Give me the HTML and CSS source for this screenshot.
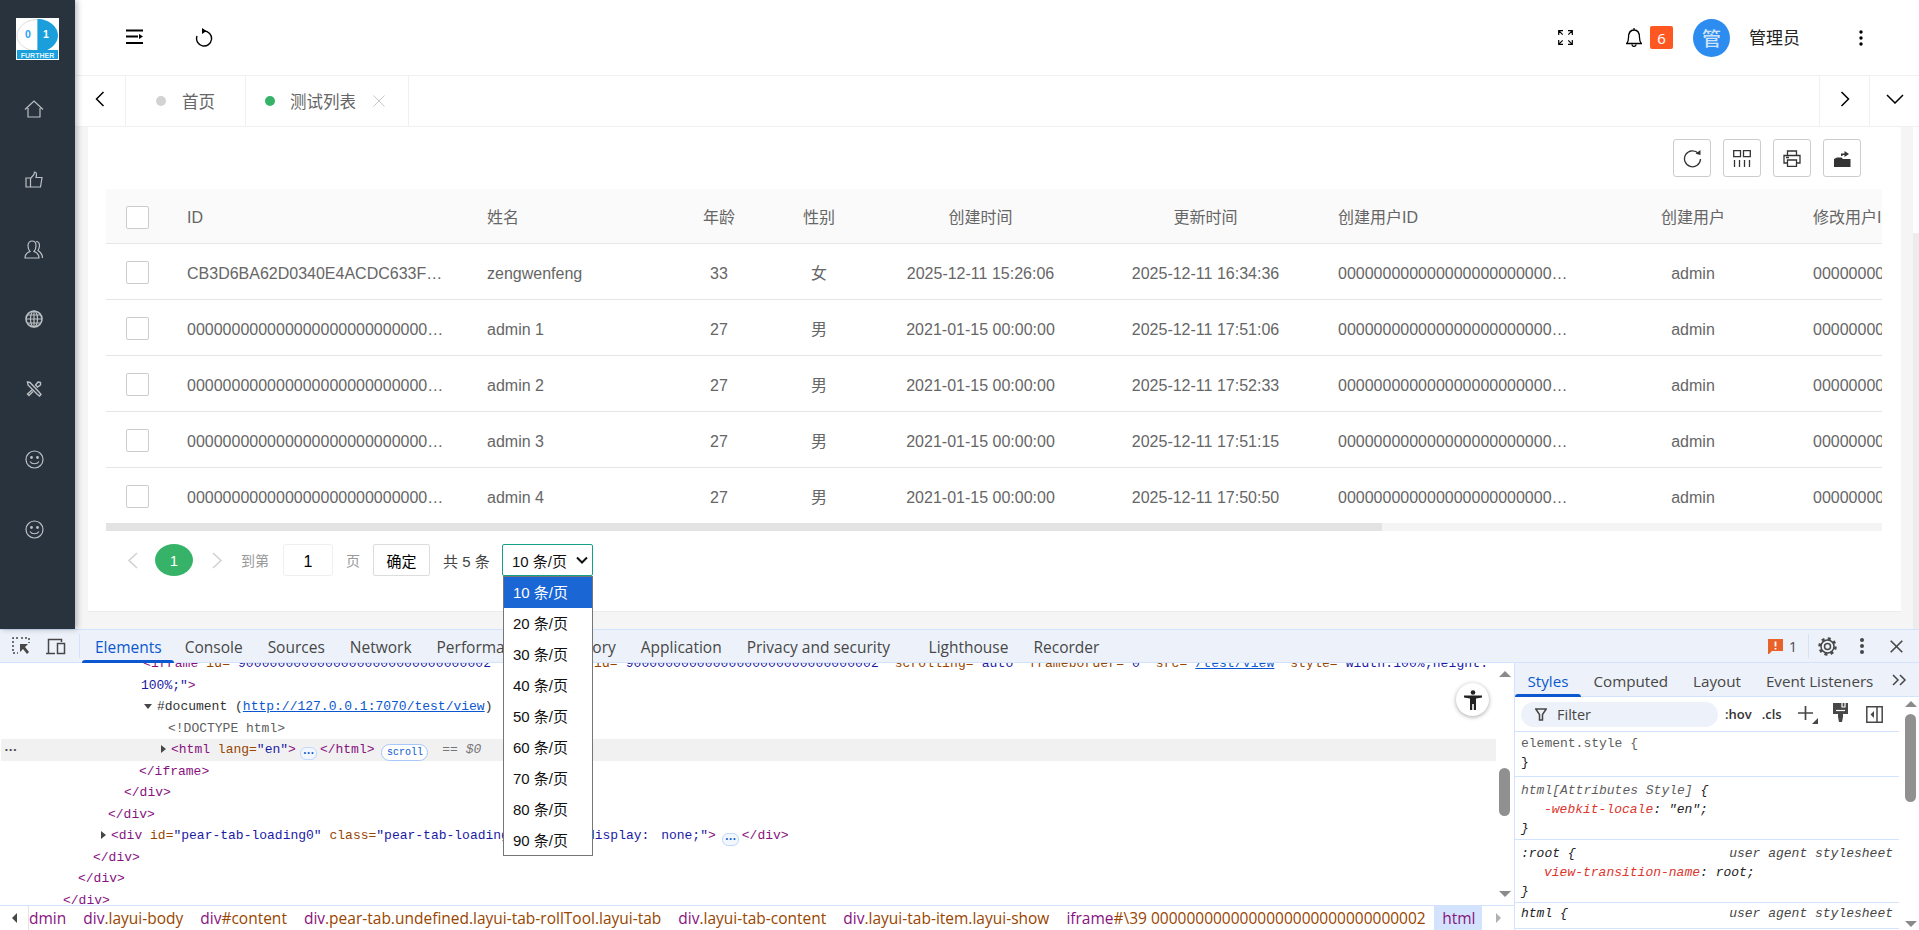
FILE: index.html
```html
<!DOCTYPE html>
<html lang="zh">
<head>
<meta charset="utf-8">
<title>测试列表</title>
<link rel="stylesheet" href="styles.css">
</head>
<body>
<div class="app">
  <aside class="side">
    <div class="logo">
      <svg width="43" height="42" viewBox="0 0 43 42">
        <rect width="43" height="42" fill="#fff"/>
        <path d="M21.5 1.5C9 1.5 1 10 1 17.5S9 33 21.5 33z" fill="#fff" stroke="#ddd"/>
        <path d="M21.5 1C33 1 42 9 42 17.5S33 34 21.5 34z" fill="#1a9fdc"/>
        <text x="12" y="20" class="logo-d logo-blue">0</text>
        <text x="30" y="20" class="logo-d">1</text>
        <rect x="1" y="32" width="41" height="9" fill="#1a9fdc"/>
        <text x="21.5" y="39.500" class="logo-t">FURTHER</text>
      </svg>
    </div>
    <nav class="nav">
      <a class="nav-i"><svg width="20" height="18" viewBox="0 0 20 18"><path d="M1 9.5 10 1l9 8.5M4 8v9h12V8"/></svg></a>
      <a class="nav-i"><svg width="18" height="17" viewBox="0 0 18 17"><path d="M1 7h4.500v9H1zM5.500 7.500 9 3.500 9.500 1c2 0 2.500 2 1.500 5.500h6L15.500 16h-10"/></svg></a>
      <a class="nav-i"><svg width="20" height="19" viewBox="0 0 20 19"><path d="M1 18c0-4 2-5.500 5-6.500C4 9.500 4 7 4 5.500 4 2.500 6 1 8 1s4 1.500 4 4.500c0 1.500 0 4-2 6 3 1 5 2.500 5 6.500zM12 1.500c2.500 0 3.500 2 3.500 4s-.5 3.500-1.500 5c2.500 1.500 4.500 3 4.500 7.500"/></svg></a>
      <a class="nav-i"><svg width="18" height="18" viewBox="0 0 18 18"><circle cx="9" cy="9" r="8" stroke-width="1.600"/><ellipse cx="9" cy="9" rx="3.500" ry="8"/><path d="M1 9h16M2 5h14M2 13h14M9 1v16"/></svg></a>
      <a class="nav-i"><svg width="16" height="16" viewBox="0 0 16 16"><path d="M1.500 1 4 1.500l9 9.500 2 2.500L13.500 15 11 13 2 4zM14.500 1.500 12 1 9.500 4l2 2 3-2zM6 9 1.500 13l1.500 1.500L7 10.500" stroke-width="1.400"/></svg></a>
      <a class="nav-i"><svg width="19" height="19" viewBox="0 0 19 19"><circle cx="9.500" cy="9.500" r="8.500"/><circle cx="6.500" cy="7.500" r=".8"/><circle cx="12.500" cy="7.500" r=".8"/><path d="M5 11.500c2 3 7 3 9 0"/></svg></a>
      <a class="nav-i"><svg width="19" height="19" viewBox="0 0 19 19"><circle cx="9.500" cy="9.500" r="8.500"/><circle cx="6.500" cy="7.500" r=".8"/><circle cx="12.500" cy="7.500" r=".8"/><path d="M5 11.500c2 3 7 3 9 0"/></svg></a>
    </nav>
  </aside>

  <main class="main">
    <header class="top">
      <div class="top-l">
        <svg class="ic" width="17" height="16" viewBox="0 0 17 16"><path d="M0 1.500h17M0 7.500h12M0 14h17" stroke-width="2"/><path class="solid" d="M13 5l4 2.500L13 10z"/></svg>
        <svg class="ic" width="18" height="19" viewBox="0 0 18 19"><path d="M9 3a7.500 7.500 0 1 1-7 5" stroke-width="1.400"/><path class="solid" d="M7 0l4.500 3L7 6z"/></svg>
      </div>
      <div class="top-r">
        <svg class="ic fs" width="15" height="15" viewBox="0 0 15 15"><path d="M.7 5V.7H5M.7.7l4 4M14.300 5V.7H10M14.300.7l-4 4M.7 10v4.300H5M.7 14.300l4-4M14.300 10v4.300H10M14.300 14.300l-4-4" stroke-width="1.200"/></svg>
        <svg class="ic bell" width="16" height="19" viewBox="0 0 16 19"><path d="M.7 15.500c1.500-1.500 1.800-3 1.800-6C2.500 5 4.500 2 8 2s5.500 3 5.500 7.500c0 3 .3 4.500 1.800 6zM8 0v2M6 16.500c0 2.500 4 2.500 4 0" stroke-width="1.300"/></svg>
        <span class="badge">6</span>
        <span class="avatar">管</span>
        <span class="uname">管理员</span>
        <svg class="more" width="4" height="16" viewBox="0 0 4 16"><circle cx="2" cy="2" r="1.700"/><circle cx="2" cy="8" r="1.700"/><circle cx="2" cy="14" r="1.700"/></svg>
      </div>
    </header>
    <div class="tabs">
      <button class="tab-nav"><svg width="10" height="16" viewBox="0 0 10 16"><path d="M8.500 1 1.500 8l7 7" stroke-width="1.500"/></svg></button>
      <div class="tab tab-a"><i class="dot dot-g"></i><span>首页</span></div>
      <div class="tab tab-b"><i class="dot dot-on"></i><span>测试列表</span><svg class="tab-x" width="12" height="12" viewBox="0 0 12 12"><path d="M.5.5l11 11M11.500.5l-11 11"/></svg></div>
      <div class="tab-fill"></div>
      <button class="tab-nav tab-nav-r"><svg width="10" height="16" viewBox="0 0 10 16"><path d="M1.500 1l7 7-7 7" stroke-width="1.500"/></svg></button>
      <button class="tab-nav tab-nav-r"><svg width="18" height="10" viewBox="0 0 18 10"><path d="M1 1l8 8 8-8" stroke-width="1.500"/></svg></button>
    </div>
    <div class="content">
      <section class="card">
        <div class="tools">
          <button class="tool"><svg width="19" height="19" viewBox="0 0 19 19"><path d="M15.500 4.500A8 8 0 1 0 17.500 10" stroke-width="1.300"/><path class="solid" d="M12.500 4.800 17.500 6V1z"/></svg></button>
          <button class="tool"><svg width="18" height="17" viewBox="0 0 18 17"><path d="M.7.700h6.800v6H.7zM10.500.700h6.800v6h-6.800zM1.500 10v7M6.500 10v7M11.500 10v7M16.500 10v7" stroke-width="1.300"/></svg></button>
          <button class="tool"><svg width="18" height="17" viewBox="0 0 18 17"><path d="M4.500 5V1h9v4M4.500 13H1V5.500h16V13h-3.500M4.500 10h9v6.500h-9zM3 7.500h3" stroke-width="1.300"/></svg></button>
          <button class="tool"><svg width="17" height="18" viewBox="0 0 17 18"><path class="solid" d="M0 10l3-1.500h4.500l1.500 1.500h7.500V18H0zM7 7V4.500h3.500V2L15 5l-4.500 3V6h-2v1z"/></svg></button>
        </div>
        <div class="tbl-wrap">
          <table class="tbl">
            <colgroup><col class="c0"><col class="c1"><col class="c2"><col class="c3"><col class="c4"><col class="c5"><col class="c6"><col class="c7"><col class="c8"><col class="c9"></colgroup>
            <thead>
              <tr><th><i class="cb"></i></th><th class="l">ID</th><th class="l">姓名</th><th>年龄</th><th>性别</th><th>创建时间</th><th>更新时间</th><th class="l">创建用户ID</th><th>创建用户</th><th class="l">修改用户ID</th></tr>
            </thead>
            <tbody>
              <tr><td><i class="cb"></i></td><td class="l">CB3D6BA62D0340E4ACDC633F74A1B2C9</td><td class="l">zengwenfeng</td><td>33</td><td>女</td><td>2025-12-11 15:26:06</td><td>2025-12-11 16:34:36</td><td class="l">00000000000000000000000000000001</td><td>admin</td><td class="l">00000000000000000000000000000001</td></tr>
              <tr><td><i class="cb"></i></td><td class="l">00000000000000000000000000000001</td><td class="l">admin 1</td><td>27</td><td>男</td><td>2021-01-15 00:00:00</td><td>2025-12-11 17:51:06</td><td class="l">00000000000000000000000000000001</td><td>admin</td><td class="l">00000000000000000000000000000001</td></tr>
              <tr><td><i class="cb"></i></td><td class="l">00000000000000000000000000000002</td><td class="l">admin 2</td><td>27</td><td>男</td><td>2021-01-15 00:00:00</td><td>2025-12-11 17:52:33</td><td class="l">00000000000000000000000000000001</td><td>admin</td><td class="l">00000000000000000000000000000001</td></tr>
              <tr><td><i class="cb"></i></td><td class="l">00000000000000000000000000000003</td><td class="l">admin 3</td><td>27</td><td>男</td><td>2021-01-15 00:00:00</td><td>2025-12-11 17:51:15</td><td class="l">00000000000000000000000000000001</td><td>admin</td><td class="l">00000000000000000000000000000001</td></tr>
              <tr class="last"><td><i class="cb"></i></td><td class="l">00000000000000000000000000000004</td><td class="l">admin 4</td><td>27</td><td>男</td><td>2021-01-15 00:00:00</td><td>2025-12-11 17:50:50</td><td class="l">00000000000000000000000000000001</td><td>admin</td><td class="l">00000000000000000000000000000001</td></tr>
            </tbody>
          </table>
        </div>
        <div class="hbar"><div class="hthumb"></div></div>
        <div class="pager">
          <svg class="p-arrow" width="11" height="17" viewBox="0 0 11 17"><path d="M10 1 2 8.500l8 7.500" stroke-width="1.600"/></svg>
          <span class="p-cur">1</span>
          <svg class="p-arrow p-next" width="11" height="17" viewBox="0 0 11 17"><path d="M1 1l8 7.500L1 16" stroke-width="1.600"/></svg>
          <span class="p-txt p-to">到第</span>
          <span class="p-in">1</span>
          <span class="p-txt p-pg">页</span>
          <span class="p-ok">确定</span>
          <span class="p-count">共 5 条</span>
          <div class="p-sel">
            <span>10 条/页</span>
            <svg width="12" height="8" viewBox="0 0 12 8"><path d="M1 1.500l5 5 5-5" stroke-width="2"/></svg>
            <ul class="p-menu">
              <li class="on">10 条/页</li><li>20 条/页</li><li>30 条/页</li><li>40 条/页</li><li>50 条/页</li><li>60 条/页</li><li>70 条/页</li><li>80 条/页</li><li>90 条/页</li>
            </ul>
          </div>
        </div>
      </section>
      <div class="vbar"><div class="vthumb"></div></div>
    </div>
  </main>
</div>

<section class="dt">
  <div class="dt-bar">
    <svg class="dt-ic inspect" width="18" height="18" viewBox="0 0 18 18"><path class="dash" d="M6 1H1v15h5M9 1h8v5"/><path class="solid dark" d="M8 7h8l-3 3 4 5-2 2-4-5-3 3z"/></svg>
    <svg class="dt-ic device" width="21" height="17" viewBox="0 0 21 17"><path d="M1 15.500h9M3.500 15V1.500h13V4M12.500 5.500h7v10h-7z" stroke-width="1.500"/></svg>
    <i class="dt-sep"></i>
    <nav class="dt-tabs">
      <span class="dt-tab on">Elements</span><span class="dt-tab">Console</span><span class="dt-tab">Sources</span><span class="dt-tab">Network</span><span class="dt-tab">Performance</span><span class="dt-tab">Memory</span><span class="dt-tab">Application</span><span class="dt-tab wide">Privacy and security</span><span class="dt-tab">Lighthouse</span><span class="dt-tab">Recorder</span>
    </nav>
    <div class="dt-right">
      <svg class="issue" width="15" height="15" viewBox="0 0 15 15"><path d="M0 0h15v12H4l-3 3H0z" fill="#e8622a"/><path d="M7.500 2.500v5M7.500 9v1.500" stroke="#fff" stroke-width="1.800"/></svg>
      <span class="issue-n">1</span>
      <i class="dt-sep dt-sep-r"></i>
      <svg class="dt-ic gear" width="19" height="19" viewBox="0 0 19 19"><circle cx="9.500" cy="9.500" r="3" stroke-width="1.500"/><circle cx="9.500" cy="9.500" r="6.500" stroke-width="1.500"/><circle class="gear-t" cx="9.500" cy="9.500" r="8" stroke-width="2.500"/></svg>
      <svg class="dots" width="4" height="16" viewBox="0 0 4 16"><circle cx="2" cy="2" r="2"/><circle cx="2" cy="8" r="2"/><circle cx="2" cy="14" r="2"/></svg>
      <svg class="dt-ic close" width="13" height="13" viewBox="0 0 13 13"><path d="M.7.700l11.600 11.600M12.300.700.700 12.300" stroke-width="1.600"/></svg>
    </div>
  </div>
  <div class="dt-body">
    <div class="dt-left">
      <div class="dom">
<div class="ln first i1"><span class="t">&lt;iframe</span> <span class="a">id=</span><span class="v">"90000000000000000000000000000002"</span> <span class="a">data-frame-id=</span><span class="v">"90000000000000000000000000000002"</span> <span class="a">scrolling=</span><span class="v">"auto"</span> <span class="a">frameborder=</span><span class="v">"0"</span> <span class="a">src=</span><span class="v">"</span><a class="lk">/test/view</a><span class="v">"</span> <span class="a">style=</span><span class="v">"width:100%;height:</span></div>
<div class="ln i1"><span class="v">100%;</span><span class="v">"</span><span class="t">&gt;</span></div>
<div class="ln i2 tri-d"><span class="d">#document (</span><a class="lk">http://127.0.0.1:7070/test/view</a><span class="d">)</span></div>
<div class="ln i3"><span class="g">&lt;!DOCTYPE html&gt;</span></div>
<div class="ln sel i4 tri-r"><span class="sel-dots">•••</span><span class="t">&lt;html</span> <span class="a">lang=</span><span class="v">"en"</span><span class="t">&gt;</span><i class="pill-e pill-h">•••</i><span class="t">&lt;/html&gt;</span><i class="pill-s">scroll</i><span class="eq"> == $0</span></div>
<div class="ln i5"><span class="t">&lt;/iframe&gt;</span></div>
<div class="ln i6"><span class="t">&lt;/div&gt;</span></div>
<div class="ln i7"><span class="t">&lt;/div&gt;</span></div>
<div class="ln i8 tri-r"><span class="t">&lt;div</span> <span class="a">id=</span><span class="v">"pear-tab-loading0"</span> <span class="a">class=</span><span class="v">"pear-tab-loading0"</span> <span class="a">style=</span><span class="v ws">"display: none;"</span><span class="t">&gt;</span><i class="pill-e pill-w">•••</i><span class="t">&lt;/div&gt;</span></div>
<div class="ln i9"><span class="t">&lt;/div&gt;</span></div>
<div class="ln i10"><span class="t">&lt;/div&gt;</span></div>
<div class="ln i11"><span class="t">&lt;/div&gt;</span></div>
      </div>
      <div class="a11y"><svg width="18" height="20" viewBox="0 0 18 20"><circle cx="9" cy="2.500" r="2.300"/><path d="M0 5.500h18v2l-6 1V20H9.800v-6H8.200v6H6V8.500l-6-1z"/></svg></div>
      <div class="sb sb-dom"><i class="up"></i><i class="sb-th"></i><i class="dn"></i></div>
      <div class="crumbs">
        <span class="cr-back"><i class="tl"></i></span>
        <div class="cr-list">
          <span class="cr"><b class="p">dmin</b></span>
          <span class="cr"><b class="p">div</b><b class="o">.layui-body</b></span>
          <span class="cr"><b class="p">div</b><b class="o">#content</b></span>
          <span class="cr"><b class="p">div</b><b class="o">.pear-tab.undefined.layui-tab-rollTool.layui-tab</b></span>
          <span class="cr"><b class="p">div</b><b class="o">.layui-tab-content</b></span>
          <span class="cr"><b class="p">div</b><b class="o">.layui-tab-item.layui-show</b></span>
          <span class="cr"><b class="p">iframe</b><b class="o">#\39 0000000000000000000000000000002</b></span>
          <span class="cr cr-on"><b class="p">html</b></span>
        </div>
        <span class="cr-next"><i class="tr"></i></span>
      </div>
    </div>
    <div class="dt-pane">
      <nav class="st-tabs">
        <span class="st-tab on">Styles</span><span class="st-tab">Computed</span><span class="st-tab">Layout</span><span class="st-tab">Event Listeners</span>
        <svg class="st-more" width="15" height="12" viewBox="0 0 15 12"><path d="M1 1l5 5-5 5M8 1l5 5-5 5" stroke-width="1.500"/></svg>
      </nav>
      <div class="st-filter">
        <div class="st-pill"><svg width="12" height="13" viewBox="0 0 12 13"><path d="M.8 1h10.400L7.500 6.500V12h-3V6.500z" stroke-width="1.500"/></svg><span>Filter</span></div>
        <span class="st-b hov">:hov</span><span class="st-b cls">.cls</span>
        <svg class="st-plus" width="21" height="19" viewBox="0 0 21 19"><path d="M7.500 1v14M0 8h15" stroke-width="1.700"/><path class="solid" d="M20 13v6h-6z"/></svg>
        <svg class="st-brush" width="15" height="19" viewBox="0 0 15 19"><path class="solid" d="M0 0h15v11h-5v3l-1 5H6l-1-5v-3H0z"/><path d="M3 7.500h9" stroke="#fff" stroke-width="1.200"/><path d="M9 0v4h3V0" stroke="#fff" stroke-width="1.200" fill="none"/></svg>
        <svg class="st-side" width="17" height="17" viewBox="0 0 17 17"><path d="M.8.800h15.400v15.400H.8zM11 1v15" stroke-width="1.500"/><path class="solid" d="M8 5v7L4.500 8.500z"/></svg>
      </div>
      <div class="rules">
        <div class="rule r1"><div class="rl gr">element.style {</div><div class="rl">}</div></div>
        <div class="rule r2"><div class="rl it gr">html[Attributes Style] <span class="bk">{</span></div><div class="rl it pr"><span class="red">-webkit-locale</span>: <span class="bk">"en"</span>;</div><div class="rl it">}</div></div>
        <div class="rule r2"><div class="rl it rh"><span>:root {</span><span class="ua">user agent stylesheet</span></div><div class="rl it pr"><span class="red">view-transition-name</span>: root;</div><div class="rl it">}</div></div>
        <div class="rule"><div class="rl it rh"><span>html {</span><span class="ua">user agent stylesheet</span></div></div>
      </div>
      <div class="sb sb-st"><i class="up"></i><i class="sb-th"></i><i class="dn"></i></div>
    </div>
  </div>
</section>
</body>
</html>
```
FILE: styles.css
```css
* { box-sizing: border-box; }
html, body { margin: 0; height: 930px; overflow: hidden; }
body { display: flex; flex-direction: column; background: #fff; font-family: "Liberation Sans", "Noto Sans CJK SC", sans-serif; color: #666; }
svg { display: block; fill: none; stroke: currentColor; flex: none; }
svg .solid { fill: currentColor; stroke: none; }
button { background: none; border: 0; padding: 0; }
ul { margin: 0; padding: 0; list-style: none; }

.app { height: 629px; flex: none; display: flex; position: relative; z-index: 2; }
.side { width: 75px; flex: none; background: #28333e; box-shadow: 2px 0 6px rgba(0,0,0,.28); position: relative; z-index: 3; }
.logo { padding: 18px 0 0 16px; height: 74px; }
.logo svg { stroke: none; }
.logo-d { font: bold 10.500px "Liberation Sans", sans-serif; fill: #fff; text-anchor: middle; }
.logo-blue { fill: #2a9df4; }
.logo-t { font: bold 7px "Liberation Sans", sans-serif; fill: #dff3fd; text-anchor: middle; }
.nav { display: flex; flex-direction: column; }
.nav-i { height: 70px; width: 68px; display: flex; align-items: center; justify-content: center; color: #bcc0c4; }
.nav-i svg { stroke-width: 1.200; }
.nav-i circle[r=".8"] { fill: currentColor; }

.main { flex: 1; min-width: 0; display: flex; flex-direction: column; }
.top { height: 76px; flex: none; border-bottom: 1px solid #f0f0f0; display: flex; justify-content: space-between; align-items: center; padding: 0 56px 0 51px; color: #000; }
.top-l { display: flex; align-items: center; gap: 52px; margin-top: -1px; }
.top-r { display: flex; align-items: center; }
.fs { margin-right: 53px; }
.bell { margin-right: 8px; }
.badge { width: 23px; height: 23px; margin-right: 20px; border-radius: 2px; background: #ff5722; color: #fff; font-size: 15px; display: flex; align-items: center; justify-content: center; font-family: "Noto Sans", sans-serif; }
.avatar { width: 37px; height: 38px; border-radius: 50%; background: #2d8cf0; color: #cfe4fb; font-size: 19px; display: flex; align-items: center; justify-content: center; margin-right: 19px; font-weight: 500; }
.uname { font-size: 17px; color: #222; margin-right: 59px; margin-top: -2px; }
.more { fill: #000; stroke: none; }

.tabs { height: 51px; flex: none; display: flex; border-bottom: 1px solid #f0f0f0; color: #000; }
.tab-nav { width: 51px; display: flex; align-items: center; justify-content: center; padding-bottom: 4px; color: #000; border-right: 1px solid #f0f0f0; }
.tab-nav-r { width: 50px; border-right: 0; border-left: 1px solid #f0f0f0; }
.tab { display: flex; align-items: center; font-size: 16.500px; color: #666; border-right: 1px solid #f0f0f0; margin-bottom: -3px; padding-bottom: 3px; }
.tab-a { width: 120px; padding-left: 30px; }
.tab-b { width: 163px; padding-left: 19px; }
.dot { width: 10px; height: 10px; border-radius: 50%; margin-right: 16px; }
.dot-g { background: #d2d2d2; }
.dot-on { background: #36b368; margin-right: 15px; }
.tab-x { margin-left: 17px; color: #c8c8c8; }
.tab-fill { flex: 1; }

.content { flex: 1; min-height: 0; display: flex; background: #f5f5f5; padding-left: 13px; }
.card { flex: 1; min-width: 0; height: 485px; background: #fff; border-bottom: 1px solid #ececec; padding: 12px 19px 0 18px; }
.tools { display: flex; justify-content: flex-end; gap: 12px; padding-right: 21px; margin-bottom: 12px; }
.tool { width: 38px; height: 38px; border: 1px solid #ccc; border-radius: 3px; display: flex; align-items: center; justify-content: center; color: #333; }
.tbl-wrap { overflow: hidden; }
.tbl { table-layout: fixed; width: 2000px; border-collapse: separate; border-spacing: 0; font-size: 16px; line-height: 20px; }
.c0 { width: 65px; } .c1 { width: 300px; } .c2 { width: 201px; } .c3 { width: 94px; } .c4 { width: 106px; }
.c5 { width: 217px; } .c6 { width: 233px; } .c7 { width: 267px; } .c8 { width: 208px; } .c9 { width: 309px; }
.tbl th, .tbl td { font-weight: 400; text-align: center; padding: 5px 16px 0; border-bottom: 1px solid #e6e6e6; white-space: nowrap; overflow: hidden; text-overflow: ellipsis; color: #666; height: 56px; }
.tbl th { background: #fafafa; height: 55px; padding-top: 3px; }
.tbl .l { text-align: left; }
.tbl th:first-child, .tbl td:first-child { padding: 2px 0 0 20px; text-align: left; }
.tbl td:nth-child(2) { padding-right: 22px; }
.tbl .last td { border-bottom: 0; height: 55px; }
.cb { display: block; width: 23px; height: 23px; border: 1px solid #ccc; border-radius: 2px; background: #fff; }

.hbar { height: 8px; background: #f4f4f4; }
.hthumb { width: 1276px; height: 8px; background: #e3e3e3; }
.pager { display: flex; align-items: center; height: 32px; margin-top: 13px; font-size: 14px; }
.p-arrow { color: #d2d2d2; margin-left: 21px; }
.p-cur { width: 38px; height: 32px; border-radius: 50%; background: #36b368; color: #fff; font-size: 15px; display: flex; align-items: center; justify-content: center; margin-left: 17px; }
.p-next { margin-left: 19px; }
.p-txt { color: #999; font-size: 14px; }
.p-to { margin-left: 18px; }
.p-in { width: 50px; height: 32px; margin-left: 14px; padding-top: 3px; border: 1px solid #eee; border-radius: 3px; color: #000; display: flex; align-items: center; justify-content: center; font-size: 16px; }
.p-pg { margin-left: 13px; }
.p-ok { width: 57px; height: 32px; margin-left: 13px; border: 1px solid #ddd; border-radius: 2px; color: #000; font-size: 15px; display: flex; align-items: center; justify-content: center; }
.p-count { margin-left: 13px; width: 47px; flex: none; color: #444; font-size: 15px; white-space: nowrap; }
.p-sel { position: relative; width: 91px; height: 32px; margin-left: 12px; border: 1px solid #16a085; border-radius: 2px; color: #111; display: flex; align-items: center; justify-content: space-between; padding: 0 4px 0 9px; font-size: 15px; }
.p-sel > svg { color: #111; }
.p-menu { position: absolute; left: 0; top: 31px; width: 90px; height: 280px; background: #fff; border: 1px solid #767676; z-index: 5; font-size: 15px; }
.p-menu li { height: 31px; line-height: 31px; padding-left: 9px; color: #111; }
.p-menu li.on { background: #1a66d4; color: #fff; }

.vbar { width: 18px; flex: none; position: relative; background: #f5f5f5; }
.vthumb { position: absolute; right: 0; top: 0; bottom: 0; width: 6px; background: #fff; }
.vthumb::after { content: ""; position: absolute; left: 0; right: 0; top: 106px; bottom: 0; background: #ececec; }

.dt { flex: 1; min-height: 0; display: flex; flex-direction: column; font-family: "Open Sans", "Liberation Sans", sans-serif; color: #333; position: relative; z-index: 1; background: #fff; }
.dt-bar { height: 34px; flex: none; display: flex; align-items: center; background: #edf2fa; border-top: 1px solid #d3e3fd; border-bottom: 1px solid #d3e3fd; position: relative; z-index: 2; color: #474747; }
.dt-ic { color: #474747; }
.inspect { margin-left: 12px; }
.dash { stroke-dasharray: 2 2; stroke-width: 1.500; }
.device { margin-left: 15px; }
.dt-sep { width: 1px; height: 24px; background: #d3e3fd; margin-left: 13px; }
.dt-tabs { display: flex; height: 100%; margin-left: 2px; }
.dt-tab { position: relative; display: flex; align-items: center; padding: 1px 12.500px 0; font-size: 15.500px; color: #474747; white-space: nowrap; }
.dt-tab.on { color: #0b57d0; margin-right: -2px; padding-left: 13px; }
.dt-tab.on::after, .st-tab.on::after { content: ""; position: absolute; left: 0; right: 0; bottom: -1px; height: 3px; background: #0b57d0; border-radius: 3px 3px 0 0; }
.dt-tab.wide { padding-right: 26px; }
.dt-right { margin-left: auto; display: flex; align-items: center; padding-right: 16px; }
.issue { fill: initial; stroke: none; }
.issue-n { font-size: 14px; margin-left: 6px; color: #474747; }
.dt-sep-r { margin-left: 11px; }
.gear { margin-left: 9px; }
.gear-t { stroke-dasharray: 3 3.280; }
.dots { margin-left: 23px; fill: #474747; stroke: none; }
.close { margin-left: 26px; }

.dt-body { flex: 1; min-height: 0; display: flex; }
.dt-left { width: 1515px; flex: none; position: relative; overflow: hidden; border-right: 1px solid #d3e3fd; }
.dom { height: 242px; overflow: hidden; font: 13px/21.500px "Liberation Mono", monospace; }
.ln { position: relative; white-space: pre; height: 21.500px; color: #333; }
.first { margin-top: -10px; letter-spacing: .11px; }
.sel { background: #f1f1f1; width: 1495px; margin-left: 1px; }
.sel-dots { position: absolute; left: 3px; top: 0; font-size: 8px; color: #444; letter-spacing: -.5px; }
.i1 { padding-left: 141px; }
.first.i1 { padding-left: 143px; }
.i2 { padding-left: 157px; }
.i3 { padding-left: 168px; }
.i4 { padding-left: 170px; }
.i5 { padding-left: 139px; }
.i6 { padding-left: 124px; }
.i7 { padding-left: 108px; }
.i8 { padding-left: 111px; }
.i9 { padding-left: 93px; }
.i10 { padding-left: 78px; }
.i11 { padding-left: 63px; }
.tri-d::before { content: ""; position: absolute; left: 144px; top: 8px; border: 4.500px solid transparent; border-top: 5px solid #474747; border-bottom: 0; }
.tri-r::before { content: ""; position: absolute; top: 6px; border: 4.500px solid transparent; border-left: 5px solid #474747; border-right: 0; }
.i4.tri-r::before { left: 160px; }
.i8.tri-r::before { left: 101px; }
.t { color: #881280; }
.a { color: #994500; }
.v { color: #1a1aa6; }
.ws { word-spacing: 4px; }
.lk { color: #0b57d0; text-decoration: underline; }
.d { color: #333; }
.g { color: #5e5e5e; }
.eq { color: #777; font-style: italic; margin-left: 6px; }
.pill-e { display: inline-flex; align-items: center; justify-content: center; width: 17px; height: 13px; margin: 0 2px; border: 1px solid #c2d8fb; border-radius: 6px; background: #f2f6fd; color: #0b57d0; font-size: 7px; font-style: normal; vertical-align: -2px; letter-spacing: -.5px; }
.pill-h { margin-left: 4px; margin-right: 3px; }
.pill-w { margin-left: 6px; margin-right: 3px; }
.pill-s { display: inline-flex; align-items: center; justify-content: center; width: 47px; height: 17px; margin: 0 0 0 7px; border: 1px solid #a8c7fa; border-radius: 9px; background: #fff; color: #0b57d0; font-size: 10px; font-style: normal; vertical-align: -2px; }
.a11y { position: absolute; left: 1456px; top: 20px; width: 33px; height: 33px; border-radius: 50%; background: #fff; box-shadow: 0 1px 4px rgba(0,0,0,.35); display: flex; align-items: center; justify-content: center; }
.a11y svg { fill: #222; stroke: none; }
.sb { position: absolute; display: flex; flex-direction: column; align-items: center; }
.sb i { display: block; }
.up { width: 0; height: 0; border: 6.500px solid transparent; border-bottom: 6px solid #8a8a8a; border-top: 0; }
.dn { width: 0; height: 0; border: 6.500px solid transparent; border-top: 6px solid #8a8a8a; border-bottom: 0; margin-top: auto; }
.sb-th { width: 11px; background: #909090; border-radius: 6px; }
.sb-dom { left: 1499px; top: 8px; width: 11px; height: 226px; }
.sb-dom .sb-th { height: 48px; margin-top: 91px; }
.crumbs { height: 25px; border-top: 1px solid #d3e3fd; display: flex; font-family: "Open Sans", sans-serif; }
.cr-back { width: 29px; flex: none; display: flex; align-items: center; justify-content: center; border-right: 1px solid #e3e3e3; }
.tl { border: 5px solid transparent; border-right: 5px solid #474747; border-left: 0; }
.tr { border: 5px solid transparent; border-left: 5px solid #b0b0b0; border-right: 0; }
.cr-list { flex: 1; min-width: 0; display: flex; overflow: hidden; font-size: 15.500px; line-height: 25px; }
.cr { padding: 0 8.500px; white-space: nowrap; }
.cr:first-child { padding-left: 0; }
.cr b { font-weight: 400; }
.cr .p { color: #881280; }
.cr .o { color: #994500; }
.cr-on { background: #d3e3fd; padding: 0 8px; width: 49px; flex: none; }
.cr-next { width: 32px; flex: none; display: flex; align-items: center; justify-content: center; }

.dt-pane { flex: 1; min-width: 0; position: relative; overflow: hidden; }
.st-tabs { height: 34px; display: flex; align-items: center; background: #edf2fa; border-bottom: 1px solid #d3e3fd; color: #474747; }
.st-tab { position: relative; height: 100%; display: flex; align-items: center; padding: 3px 12.500px 0; font-size: 15.200px; white-space: nowrap; }
.st-tab.on { color: #0b57d0; }
.st-more { margin-left: 6px; color: #474747; }
.st-filter { height: 35px; display: flex; align-items: center; border-bottom: 1px solid #d3e3fd; padding-left: 6px; margin-right: 20px; color: #474747; }
.st-pill { width: 197px; height: 25px; border-radius: 13px; background: #edf2fa; display: flex; align-items: center; padding-left: 14px; gap: 10px; font-size: 14.500px; flex: none; }
.st-b { font-weight: 600; font-size: 13px; color: #333; }
.hov { margin-left: 7px; }
.cls { margin-left: 10px; }
.st-plus { margin-left: 16px; }
.st-brush { margin-left: 14px; margin-top: -3px; }
.st-side { margin-left: 18px; }
.rules { font: 13px/19px "Liberation Mono", monospace; margin-right: 20px; color: #222; }
.rule { border-bottom: 1px solid #d3e3fd; padding: 1px 6px 5px; }
.r1 { height: 45px; padding-top: 2px; }
.r2 { height: 63px; padding-top: 4px; }
.rl { white-space: pre; height: 19px; }
.it { font-style: italic; }
.gr { color: #5e5e5e; }
.bk { color: #222; }
.pr { padding-left: 23px; }
.red { color: #dc362e; }
.rh { display: flex; justify-content: space-between; }
.ua { color: #474747; }
.sb-st { left: 390px; top: 38px; width: 11px; height: 226px; }
.sb-st .sb-th { height: 88px; margin-top: 7px; }
```
